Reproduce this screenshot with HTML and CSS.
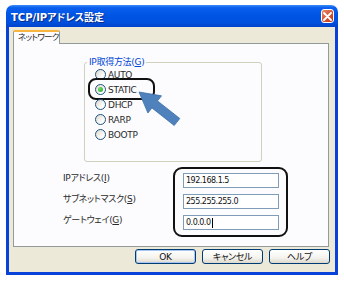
FILE: index.html
```html
<!DOCTYPE html>
<html lang="ja">
<head>
    <meta charset="UTF-8">
    <meta name="viewport" content="width=device-width, initial-scale=1.0">
    <title>TCP/IPアドレス設定</title>
    <link rel="stylesheet" href="styles.css">
</head>
<body>
    <div class="window">
        <!-- Title bar -->
        <div class="titlebar">
            <span class="title">TCP/IPアドレス設定</span>
            <span class="close-btn">
                <svg width="9" height="9" viewBox="0 0 9 9">
                    <path d="M1 1 L8 8 M8 1 L1 8" stroke="#fff" stroke-width="1.8" stroke-linecap="round"/>
                </svg>
            </span>
        </div>

        <div class="window-body">
            <div class="tabs">
                <div class="tab active">ネットワーク</div>
            </div>

            <div class="tab-panel">
                <!-- IP mode -->
                <fieldset class="group">
                    <legend>IP取得方法(<u>G</u>)</legend>
                    <div class="radio-list">
                        <div class="radio"><span class="radio-dot"></span>AUTO</div>
                        <div class="radio checked marked"><span class="radio-dot"></span>STATIC</div>
                        <div class="radio"><span class="radio-dot"></span>DHCP</div>
                        <div class="radio"><span class="radio-dot"></span>RARP</div>
                        <div class="radio"><span class="radio-dot"></span>BOOTP</div>
                    </div>
                </fieldset>

                <!-- Address fields -->
                <div class="address-form">
                    <div class="field-labels">
                        <label>IPアドレス(<u>I</u>)</label>
                        <label>サブネットマスク(<u>S</u>)</label>
                        <label>ゲートウェイ(<u>G</u>)</label>
                    </div>
                    <div class="field-box">
                        <div class="text-field">192.168.1.5</div>
                        <div class="text-field">255.255.255.0</div>
                        <div class="text-field">0.0.0.0<span class="caret"></span></div>
                    </div>
                </div>
            </div>

            <div class="button-row">
                <button class="btn default">OK</button>
                <button class="btn">キャンセル</button>
                <button class="btn">ヘルプ</button>
            </div>
        </div>

        <!-- Callout arrow -->
        <svg class="pointer-arrow" width="56" height="44" viewBox="130 87 56 44">
            <polygon points="139,92 161.5,95.8 157.5,100.9 179.8,118.5 174.2,125.5 151.9,107.9 147.9,113" fill="#4f81bd" stroke="#3e6ea6" stroke-width="0.8" stroke-linejoin="round"/>
        </svg>
    </div>
</body>
</html>
```

FILE: styles.css
```css
/* General Styles */
body {
    margin: 0;
    background: #fff;
    font-family: "DejaVu Sans", "Noto Sans CJK JP", sans-serif;
    font-size: 9px;
    font-feature-settings: "palt";
    letter-spacing: -0.3px;
    color: #2a2a2a;
}

.window {
    position: relative;
    width: 332px;
    margin: 5px 0 0 6px;
}

/* Title bar */
.titlebar {
    height: 22px;
    display: flex;
    align-items: center;
    justify-content: space-between;
    padding: 0 4px 0 5px;
    box-sizing: border-box;
    border-radius: 7px 7px 0 0;
    background: linear-gradient(#3d8df5 0%, #0a5fee 12%, #0055e5 45%, #0050dd 80%, #0043c9 100%);
}

.title {
    color: #fff;
    font-weight: bold;
    font-size: 10px;
    letter-spacing: 0;
    text-shadow: 1px 1px 0 #0a2a8a;
}

.close-btn {
    width: 13px;
    height: 14px;
    display: flex;
    align-items: center;
    justify-content: center;
    box-sizing: border-box;
    border: 1px solid #fff;
    border-radius: 3px;
    background: linear-gradient(135deg, #e88a6e, #d6522f 55%, #bd3a1c);
}

.window-body {
    height: 248px;
    box-sizing: border-box;
    padding: 3px 6px 0 4px;
    background: #ece9d8;
    border: 3px solid #0842d8;
    border-top: none;
}

/* Tabs */
.tabs {
    display: flex;
}

.tab {
    position: relative;
    z-index: 1;
    width: 47px;
    height: 14px;
    margin-bottom: -1px;
    box-sizing: border-box;
    padding-left: 4px;
    font-size: 8.5px;
    line-height: 11px;
    white-space: nowrap;
    letter-spacing: -0.7px;
    background: #fcfcfe;
    border: 1px solid #919b9c;
    border-top: 2px solid #f7b53f;
    border-bottom: none;
    border-radius: 2px 2px 0 0;
}

.tab-panel {
    height: 204px;
    box-sizing: border-box;
    padding-top: 13px;
    background: #fcfcfe;
    border: 1px solid #919b9c;
}

/* Group box */
.group {
    width: 178px;
    margin: 0 0 0 70px;
    padding: 0 0 19px 2px;
    box-sizing: border-box;
    border: 1px solid #d0d0bf;
    border-radius: 3px;
}

.group legend {
    padding: 0 2px;
    line-height: 10px;
    color: #0046d5;
}

.radio-list {
    padding-left: 8px;
}

.radio {
    position: relative;
    height: 15px;
    display: flex;
    align-items: center;
    gap: 2px;
}

.radio-dot {
    width: 11px;
    height: 11px;
    box-sizing: border-box;
    border: 1px solid #1c5180;
    border-radius: 50%;
    background: linear-gradient(135deg, #dcd9cf, #fff 75%);
    display: flex;
    align-items: center;
    justify-content: center;
}

.radio.checked .radio-dot::before {
    content: "";
    width: 5px;
    height: 5px;
    border-radius: 50%;
    background: radial-gradient(circle at 35% 35%, #6fdc6f, #21a121);
}

.radio.marked::after {
    content: "";
    position: absolute;
    left: -7px;
    top: -4px;
    width: 67px;
    height: 22px;
    box-sizing: border-box;
    border: 2px solid #111;
    border-radius: 8px;
}

/* Address fields */
.address-form {
    display: flex;
    margin: 5px 0 0 49px;
}

.field-labels {
    width: 110px;
    display: flex;
    flex-direction: column;
    gap: 6px;
    padding-top: 4px;
}

.field-labels label {
    height: 15px;
    line-height: 15px;
}

.field-box {
    width: 115px;
    box-sizing: border-box;
    padding: 4px 7px 5px 8px;
    border: 2px solid #111;
    border-radius: 9px;
    display: flex;
    flex-direction: column;
    gap: 6px;
}

.text-field {
    height: 15px;
    box-sizing: border-box;
    padding-left: 2px;
    border: 1px solid #7f9db9;
    background: #fff;
    font-size: 8px;
    letter-spacing: -0.5px;
    line-height: 13px;
    color: #111;
    display: flex;
    align-items: center;
}

.caret {
    width: 1px;
    height: 10px;
    margin-left: 1px;
    background: #000;
}

/* Buttons */
.button-row {
    display: flex;
    justify-content: flex-end;
    gap: 6px;
    margin: 2px -1px 0 0;
}

.btn {
    width: 61px;
    height: 15px;
    padding: 0;
    font: inherit;
    font-feature-settings: "palt";
    letter-spacing: -0.3px;
    color: #111;
    border: 1px solid #003c74;
    border-radius: 3px;
    background: linear-gradient(#fff, #f4f3ee 60%, #dcd8cc);
}

.btn.default {
    box-shadow: inset 0 0 0 1px #a8c4f0;
}

/* Callout */
.pointer-arrow {
    position: absolute;
    left: 124px;
    top: 82px;
}
```
